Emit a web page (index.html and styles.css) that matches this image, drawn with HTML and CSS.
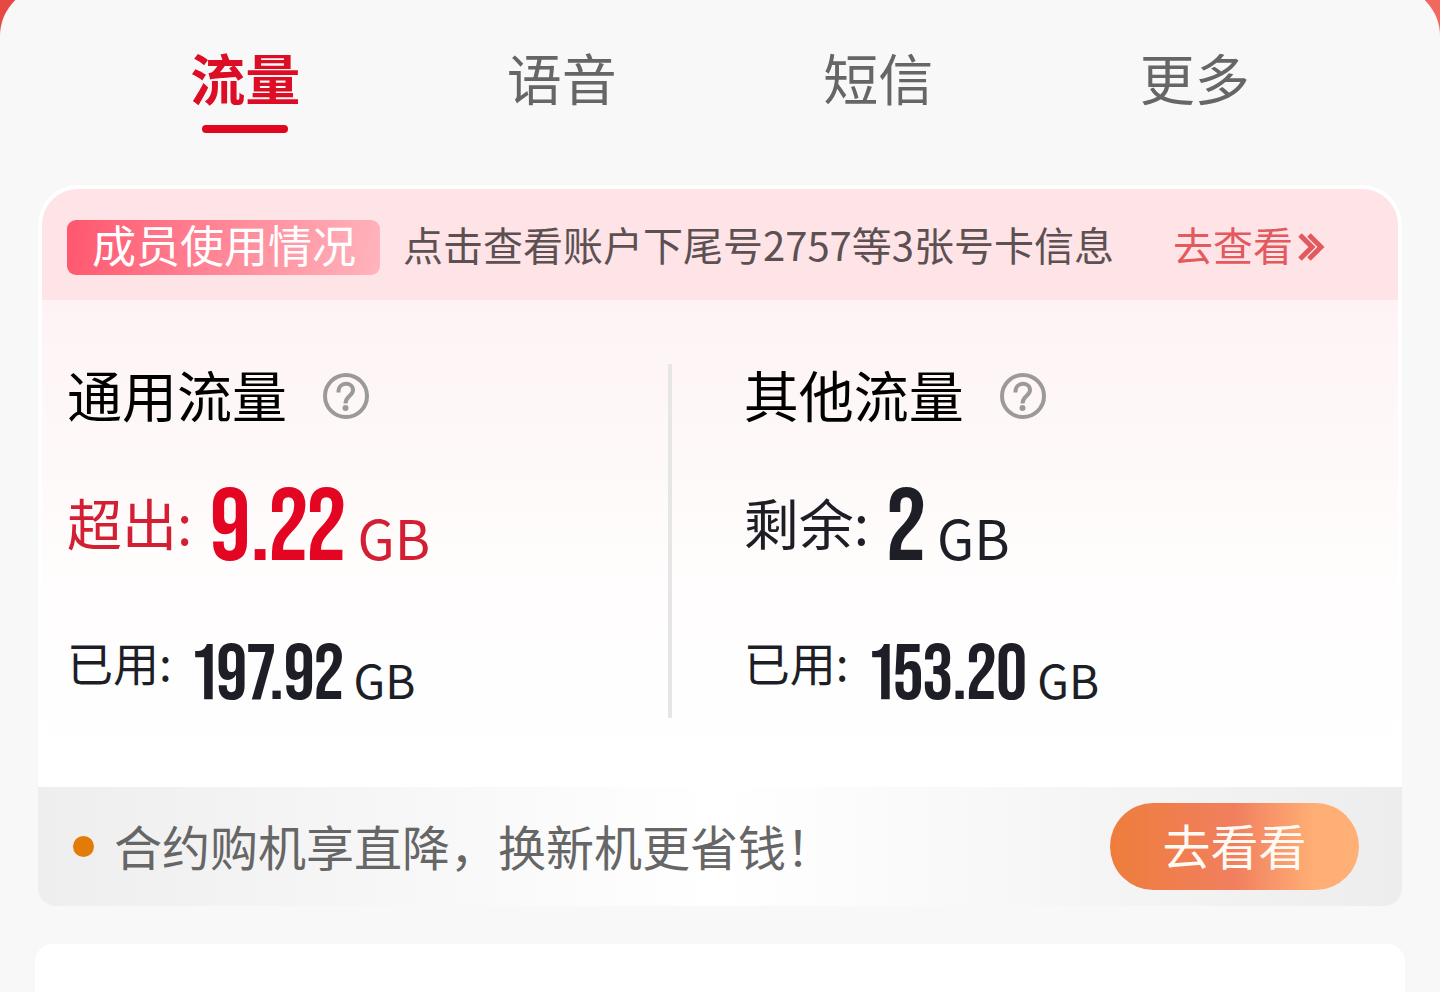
FILE: index.html
```html
<!DOCTYPE html>
<html lang="zh-CN">
<head>
<meta charset="utf-8">
<meta name="viewport" content="width=device-width, initial-scale=1">
<title>流量</title>
<link rel="stylesheet" href="styles.css">
</head>
<body>
<main class="panel">
  <nav class="tabs">
    <button type="button" class="tab tab-active" aria-current="true">流量</button>
    <button type="button" class="tab">语音</button>
    <button type="button" class="tab">短信</button>
    <button type="button" class="tab">更多</button>
  </nav>

  <section class="card">
    <div class="inner">
      <div class="banner">
        <span class="badge">成员使用情况</span>
        <span class="banner-text">点击查看账户下尾号2757等3张号卡信息</span>
        <a class="banner-link" href="#">去查看<svg class="chevrons" viewBox="0 0 28 30" aria-hidden="true"><path d="M2 3l12 12L2 27M11 3l12 12L11 27"/></svg></a>
      </div>
      <div class="usage">
        <div class="column">
          <div class="title-row">
            <h2 class="title">通用流量</h2>
            <button type="button" class="help" aria-label="通用流量说明"><svg class="help-icon" viewBox="0 0 46 46" aria-hidden="true"><circle cx="23" cy="23" r="21"/><path d="M15.500 19.500V18.500C15.500 8.500 30 8.500 30 17C30 23 22.500 22.500 22.500 30.500"/><circle class="help-dot" cx="22.500" cy="35" r="3"/></svg></button>
          </div>
          <div class="row row-main over">
            <span class="label">超出:</span>
            <span class="amount"><span class="number">9.22</span><span class="unit">GB</span></span>
          </div>
          <div class="row row-used">
            <span class="label">已用:</span>
            <span class="amount"><span class="number">197.92</span><span class="unit">GB</span></span>
          </div>
        </div>
        <div class="column column-right">
          <div class="title-row">
            <h2 class="title">其他流量</h2>
            <button type="button" class="help" aria-label="其他流量说明"><svg class="help-icon" viewBox="0 0 46 46" aria-hidden="true"><circle cx="23" cy="23" r="21"/><path d="M15.500 19.500V18.500C15.500 8.500 30 8.500 30 17C30 23 22.500 22.500 22.500 30.500"/><circle class="help-dot" cx="22.500" cy="35" r="3"/></svg></button>
          </div>
          <div class="row row-main">
            <span class="label">剩余:</span>
            <span class="amount"><span class="number">2</span><span class="unit">GB</span></span>
          </div>
          <div class="row row-used">
            <span class="label">已用:</span>
            <span class="amount"><span class="number">153.20</span><span class="unit">GB</span></span>
          </div>
        </div>
      </div>
    </div>
    <div class="promo">
      <span class="dot"></span>
      <span class="promo-text">合约购机享直降，换新机更省钱！</span>
      <button type="button" class="promo-button">去看看</button>
    </div>
  </section>

  <section class="next-card"></section>
</main>
</body>
</html>
```
FILE: styles.css
```css
* {
  box-sizing: border-box;
}

html {
  background: linear-gradient(90deg, #e74843, #f0685e);
}

body {
  margin: 0;
  height: 100vh;
  overflow: hidden;
  font-family: "Noto Sans CJK SC", sans-serif;
  color: #1d1e26;
}

button {
  padding: 0;
  border: 0;
  background: none;
  font: inherit;
  color: inherit;
  cursor: pointer;
}

.panel {
  display: flex;
  flex-direction: column;
  height: calc(100vh + 14px);
  margin-top: -14px;
  padding-top: 54px;
  border-radius: 50px 50px 0 0;
  background: #f8f8f8;
}

.tabs {
  display: grid;
  grid-template-columns: repeat(4, 1fr);
  padding: 0 87px;
  margin-bottom: 52px;
}

.tab {
  display: flex;
  flex-direction: column;
  align-items: center;
  gap: 13px;
  font-size: 55px;
  line-height: 72px;
  color: #666;
}

.tab::after {
  content: "";
  width: 86px;
  height: 8px;
  border-radius: 4px;
}

.tab-active {
  font-weight: 700;
  color: #dc0d25;
}

.tab-active::after {
  background: #e1051f;
}

.card {
  margin: 0 38px 38px;
  border-radius: 40px 40px 18px 18px;
  background: #fff;
  overflow: hidden;
}

.inner {
  margin: 4px 4px 0;
  border-radius: 36px 36px 0 0;
  background: linear-gradient(#fef3f4 111px, #fef8f8 250px, #fffdfd 400px, #fff);
  overflow: hidden;
}

.banner {
  display: flex;
  align-items: center;
  height: 111px;
  padding: 6px 25px 0;
  background: #fee3e7;
  font-size: 40px;
  white-space: nowrap;
}

.badge {
  padding: 0 24px 6px 25px;
  margin-right: 23px;
  border-radius: 9px;
  background: linear-gradient(100deg, #ff566e, #ff8c9b 55%, #ffb4bd);
  font-size: 44px;
  line-height: 49px;
  color: #fff;
}

.banner-text {
  padding-bottom: 8px;
  color: #5c5052;
}

.banner-link {
  display: flex;
  align-items: center;
  gap: 5px;
  margin-left: 59px;
  padding-bottom: 8px;
  color: #e25a5d;
  text-decoration: none;
}

.chevrons {
  width: 28px;
  height: 30px;
  margin-top: 6px;
  fill: none;
  stroke: currentColor;
  stroke-width: 5;
}

.usage {
  display: grid;
  grid-template-columns: 6fr 7fr;
  padding: 64px 0 69px;
}

.column {
  display: flex;
  flex-direction: column;
  padding-left: 25px;
  white-space: nowrap;
}

.column-right {
  padding-left: 72px;
  border-left: 4px solid #e6e6e6;
}

.title-row {
  display: flex;
  align-items: center;
  gap: 36px;
  height: 64px;
}

.title {
  margin: 0;
  padding-bottom: 6px;
  font-size: 55px;
  font-weight: 400;
  line-height: 58px;
  color: #000;
}

.help {
  width: 46px;
  height: 46px;
}

.help-icon {
  display: block;
  fill: none;
  stroke: #9b9999;
  stroke-width: 4;
}

.help-dot {
  fill: #9b9999;
  stroke: none;
}

.row {
  display: flex;
  align-items: flex-start;
}

.amount {
  display: flex;
  align-items: baseline;
}

.number {
  font-family: "Bebas Neue", "Oswald", "Roboto Condensed", "Liberation Sans Narrow", sans-serif;
  font-weight: 400;
  font-variant-numeric: proportional-nums;
}

.unit {
  margin-left: 12px;
}

.row-main {
  gap: 18px;
  height: 150px;
  padding-top: 52px;
}

.row-main .label {
  font-size: 55px;
  line-height: 82px;
}

.row-main .number {
  font-size: 102px;
  line-height: 100px;
}

.row-main .unit {
  font-size: 54px;
  line-height: 64px;
}

.over .number {
  color: #e30522;
}

.row-used {
  gap: 22px;
  height: 140px;
  padding-top: 52px;
}

.row-used .label {
  font-size: 46px;
  line-height: 62px;
}

.row-used .number {
  font-size: 78px;
  line-height: 92px;
}

.row-used .unit {
  margin-left: 10px;
  font-size: 46px;
  line-height: 64px;
}

.over {
  color: #d31f33;
}

.promo {
  display: flex;
  align-items: center;
  padding: 16px 43px 16px 35px;
  background: linear-gradient(90deg, #eee, #fff 50%, #ededed);
  font-size: 48px;
}

.dot {
  width: 21px;
  height: 21px;
  margin-right: 20px;
  border-radius: 50%;
  background: #e37b08;
}

.promo-text {
  padding-bottom: 4px;
  color: #666;
  white-space: nowrap;
}

.promo-button {
  width: 249px;
  margin-left: auto;
  padding-bottom: 4px;
  border-radius: 44px;
  background: linear-gradient(90deg, #ee7d3c, #f17f5f 50%, #ffae75 82%, #ffb077);
  line-height: 83px;
  color: #fffaf3;
}

.next-card {
  flex: 1;
  margin: 0 35px;
  border-radius: 18px 18px 0 0;
  background: #fff;
}
```
